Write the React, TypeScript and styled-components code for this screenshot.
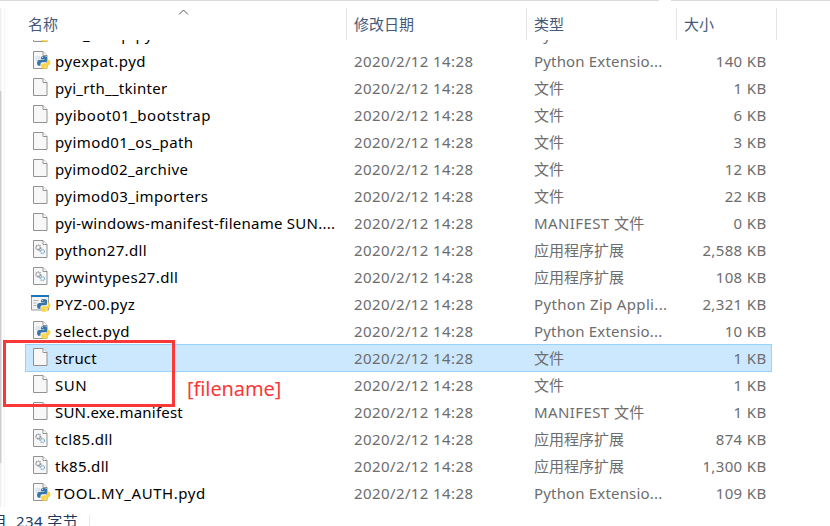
import React from "react";
import styled, { createGlobalStyle, css } from "styled-components";

const Global = createGlobalStyle`
  * { box-sizing: border-box; }
  body { margin: 0; background: #fff; overflow: hidden; }
`;

const fonts = `"Noto Sans", "Noto Sans CJK SC", sans-serif`;

const Window = styled.div`
  position: relative;
  width: 830px;
  height: 526px;
  overflow: hidden;
  background: #fff;
  font: 15px/27px ${fonts};
  display: flex;
  flex-direction: column;
`;

const TopEdge = styled.div`
  display: flex;
  gap: 12px;
  height: 1px;
  flex: none;
  &::before { content: ""; width: 659px; background: #d9d9d9; }
  &::after { content: ""; flex: 1; background: #d9d9d9; }
`;

const Body = styled.div`
  display: flex;
  height: 506px;
  flex: none;
`;

const NavScroll = styled.div`
  width: 5px;
  flex: none;
  margin-top: 7px;
  border-right: 1px solid #f5f5f5;
  background: linear-gradient(#f0f0f0 83px, #cdcdcd 83px, #cdcdcd 455px, #f0f0f0 455px) 0 0 / 1px 100% no-repeat,
    #fff;
  background-size: 1.500px 100%;
`;

const List = styled.div`
  width: 768px;
  margin-left: 20px;
  display: flex;
  flex-direction: column;
`;

const columns = css`
  display: grid;
  grid-template-columns: 321px 180px 150px 100px;
`;

const Header = styled.div`
  ${columns}
  grid-template-columns: 322px 180px 150px 100px;
  height: 39px;
  flex: none;
  padding-top: 7px;
  color: #44597a;
`;

const HeadCell = styled.div<{ $pad: number }>`
  position: relative;
  border-right: 1px solid #e5e5e5;
  padding: 3px 0 0 ${(p) => p.$pad}px;
`;

const SortMark = styled.svg`
  position: absolute;
  left: 153px;
  top: 1px;
`;

const Rows = styled.div`
  flex: 1;
  overflow: hidden;
`;

const Shift = styled.div`
  margin-top: -20px;
`;

const Row = styled.div<{ $selected?: boolean }>`
  ${columns}
  width: 747px;
  height: 28px;
  margin-bottom: -1px;
  border: 1px solid ${(p) => (p.$selected ? "#99d1ff" : "transparent")};
  background: ${(p) => (p.$selected ? "#cce8ff" : "transparent")};
  white-space: nowrap;
  color: #6d6d6d;
`;

const NameCell = styled.div`
  display: flex;
  color: #000;
`;

const IconBox = styled.div`
  width: 29px;
  flex: none;
  padding: 3px 0 0 5px;
  line-height: 0;
`;

const Label = styled.span<{ $ls?: number }>`
  letter-spacing: ${(p) => p.$ls ?? 0}px;
`;

const Cell = styled.div<{ $ls?: number }>`
  padding-left: 7px;
  letter-spacing: ${(p) => p.$ls ?? 0}px;
`;

const SizeCell = styled.div`
  text-align: right;
  padding-right: 10.500px;
  letter-spacing: 0.35px;
`;

const Marker = styled.div`
  position: absolute;
  left: 3px;
  top: 340px;
  width: 172px;
  height: 67px;
  border: 3px solid #fb3838;
`;

const MarkerText = styled.div`
  position: absolute;
  left: 187px;
  top: 375px;
  font-size: 20px;
  letter-spacing: -0.1px;
  color: #fb3838;
`;

const Status = styled.div`
  display: flex;
  height: 19px;
  overflow: hidden;
  color: #1e395b;
`;

const StatusText = styled.div`
  display: flex;
  gap: 9px;
  width: 98px;
  margin-left: -8px;
  padding-top: 1px;
  white-space: nowrap;
  background: linear-gradient(#e8e8e8, #e8e8e8) 100% 8px / 1px 100% no-repeat;
`;

type Kind = "file" | "dll" | "py" | "pyz";

const Snake = () => (
  <g transform="translate(2 -.4) scale(.87)">
    <path d="M12.4 6.200c-2.400 0-3.300.8-3.300 2.200v1.700h4v.7H7.300c-1.600 0-2.600 1.200-2.600 3.400s1 3.300 2.400 3.300h1.500v-1.900c0-1.400 1-2.300 2.400-2.300h3.300c1.100 0 1.900-.8 1.900-1.900v-3c0-1.400-1.300-2.200-3.800-2.200z" fill="#3875a8" />
    <path d="M17.100 10.600v2c0 1.400-1 2.300-2.400 2.300h-3.300c-1.100 0-1.900.8-1.900 1.900v2.100c0 1.400 1.300 2.100 3.600 2.100s3.600-.8 3.600-2.100v-1.500h-3.500v-.6h4.500c1.600 0 2.300-1.200 2.300-3.100s-.8-3.100-2.100-3.100z" fill="#ffd43b" />
    <circle cx="10.700" cy="8" r=".6" fill="#fff" />
    <circle cx="15" cy="19" r=".6" fill="#fff" />
  </g>
);

const Page = () => (
  <>
    <path d="M2.500.500h9.500l4 4v13h-13.500z" fill="#f7f7f7" stroke="#929292" />
    <path d="M12 .500v4h4" fill="#fff" stroke="#929292" />
  </>
);

const FileIcon = ({ kind }: { kind: Kind }) => (
  <svg width="22" height="22" viewBox="0 0 22 22">
    {kind === "pyz" ? (
      <>
        <path d="M.5 2.500h17v13.500H.5z" fill="#f4f4f4" stroke="#9b9b9b" />
        <path d="M0 1h18v2H0z" fill="#1877b8" />
        <path d="M2.500 6.500h5M2.500 9h3M2.500 11.500h3" stroke="#b5b5b5" />
      </>
    ) : (
      <Page />
    )}
    {kind === "dll" && (
      <g fill="none">
        <circle cx="7.300" cy="7.500" r="2.300" stroke="#8c9296" strokeWidth="1.500" strokeDasharray="1.200 .6" />
        <circle cx="9" cy="9.500" r="1.500" stroke="#9aa0a4" strokeWidth=".8" />
        <circle cx="11.500" cy="11.500" r="2" stroke="#8bb9d2" strokeWidth="1.500" strokeDasharray="1.200 .5" />
      </g>
    )}
    {kind === "py" && <circle cx="7" cy="7.500" r="2.800" fill="#dce7ef" />}
    {(kind === "py" || kind === "pyz") && <Snake />}
  </svg>
);

const typeSpacing: Record<string, number> = {
  "Python Extensio...": 0.17,
  "Python Zip Appli...": 0.33,
  "MANIFEST 文件": 0.4,
};

const files: [Kind, string, number, string, string][] = [
  ["py", "PIL._webp.pyd", 0.5, "Python Extensio...", "421 KB"],
  ["py", "pyexpat.pyd", 0.5, "Python Extensio...", "140 KB"],
  ["file", "pyi_rth__tkinter", 0.28, "文件", "1 KB"],
  ["file", "pyiboot01_bootstrap", 0.53, "文件", "6 KB"],
  ["file", "pyimod01_os_path", 0.42, "文件", "3 KB"],
  ["file", "pyimod02_archive", 0.37, "文件", "12 KB"],
  ["file", "pyimod03_importers", 0.4, "文件", "22 KB"],
  ["file", "pyi-windows-manifest-filename SUN....", 0.26, "MANIFEST 文件", "0 KB"],
  ["dll", "python27.dll", 0.35, "应用程序扩展", "2,588 KB"],
  ["dll", "pywintypes27.dll", 0.35, "应用程序扩展", "108 KB"],
  ["pyz", "PYZ-00.pyz", 0.45, "Python Zip Appli...", "2,321 KB"],
  ["py", "select.pyd", 0.45, "Python Extensio...", "10 KB"],
  ["file", "struct", 0.2, "文件", "1 KB"],
  ["file", "SUN", 0.5, "文件", "1 KB"],
  ["file", "SUN.exe.manifest", 0.2, "MANIFEST 文件", "1 KB"],
  ["dll", "tcl85.dll", 0.35, "应用程序扩展", "874 KB"],
  ["dll", "tk85.dll", 0.3, "应用程序扩展", "1,300 KB"],
  ["py", "TOOL.MY_AUTH.pyd", 0.55, "Python Extensio...", "109 KB"],
];

export default function App() {
  return (
    <Window>
      <Global />
      <TopEdge />
      <Body>
        <NavScroll />
        <List>
          <Header>
            <HeadCell $pad={3}>
              名称
              <SortMark width="11" height="7" viewBox="0 0 11 7">
                <path d="M1 5.500l4.500-4.500 4.500 4.500" fill="none" stroke="#555" />
              </SortMark>
            </HeadCell>
            <HeadCell $pad={7}>修改日期</HeadCell>
            <HeadCell $pad={7}>类型</HeadCell>
            <HeadCell $pad={7}>大小</HeadCell>
          </Header>
          <Rows>
            <Shift>
              {files.map(([kind, name, ls, type, size]) => (
                <Row key={name} $selected={name === "struct"}>
                  <NameCell>
                    <IconBox>
                      <FileIcon kind={kind} />
                    </IconBox>
                    <Label $ls={ls}>{name}</Label>
                  </NameCell>
                  <Cell $ls={0.4}>2020/2/12 14:28</Cell>
                  <Cell $ls={typeSpacing[type]}>{type}</Cell>
                  <SizeCell>{size}</SizeCell>
                </Row>
              ))}
            </Shift>
          </Rows>
        </List>
      </Body>
      <Status>
        <StatusText>
          <Label>月</Label>
          <Label $ls={0.4}>234 字节</Label>
        </StatusText>
      </Status>
      <Marker />
      <MarkerText>[filename]</MarkerText>
    </Window>
  );
}
